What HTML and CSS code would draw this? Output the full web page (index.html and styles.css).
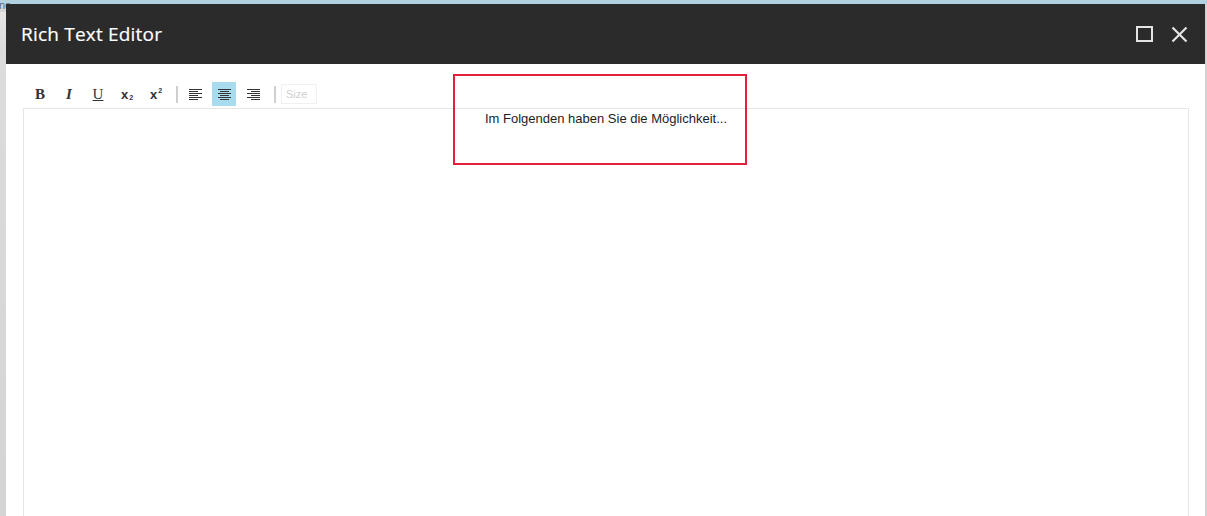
FILE: index.html
```html
<!DOCTYPE html>
<html lang="de">
<head>
<meta charset="utf-8">
<title>Rich Text Editor</title>
<link rel="stylesheet" href="styles.css">
</head>
<body>
<div class="page-top"><span class="page-top-text">ne</span></div>
<div class="page-side"></div>

<div class="modal">
  <div class="modal-header">
    <h1 class="modal-title">Rich Text Editor</h1>
    <div class="modal-actions">
      <button class="hdr-btn" aria-label="Maximieren">
        <svg width="17" height="16" viewBox="0 0 17 16"><rect x="1" y="1" width="15" height="14" fill="none" stroke="#e4e4e4" stroke-width="2"/></svg>
      </button>
      <button class="hdr-btn" aria-label="Schließen">
        <svg width="17" height="17" viewBox="0 0 17 17"><path d="M1.5 1.5 L15.5 15.5 M15.5 1.5 L1.5 15.5" stroke="#e4e4e4" stroke-width="2.2" fill="none"/></svg>
      </button>
    </div>
  </div>
  <div class="modal-body">
    <div class="toolbar">
      <button class="tb-btn tb-bold">B</button>
      <button class="tb-btn tb-italic">I</button>
      <button class="tb-btn tb-under">U</button>
      <button class="tb-btn tb-script">x<span class="sub">2</span></button>
      <button class="tb-btn tb-script">x<span class="sup">2</span></button>
      <span class="tb-sep"></span>
      <button class="tb-btn">
        <svg width="13" height="11" viewBox="0 0 13 11"><g fill="#333"><rect x="0" y="0" width="13" height="1"/><rect x="0" y="2" width="9" height="1"/><rect x="0" y="4" width="13" height="1"/><rect x="0" y="6" width="9" height="1"/><rect x="0" y="8" width="13" height="1"/><rect x="0" y="10" width="9" height="1"/></g></svg>
      </button>
      <button class="tb-btn tb-active">
        <svg width="13" height="11" viewBox="0 0 13 11"><g fill="#333"><rect x="0" y="0" width="13" height="1"/><rect x="2" y="2" width="9" height="1"/><rect x="0" y="4" width="13" height="1"/><rect x="2" y="6" width="9" height="1"/><rect x="0" y="8" width="13" height="1"/><rect x="2" y="10" width="9" height="1"/></g></svg>
      </button>
      <button class="tb-btn">
        <svg width="13" height="11" viewBox="0 0 13 11"><g fill="#333"><rect x="0" y="0" width="13" height="1"/><rect x="4" y="2" width="9" height="1"/><rect x="0" y="4" width="13" height="1"/><rect x="4" y="6" width="9" height="1"/><rect x="0" y="8" width="13" height="1"/><rect x="4" y="10" width="9" height="1"/></g></svg>
      </button>
      <span class="tb-sep tb-sep-2"></span>
      <input class="tb-size" type="text" placeholder="Size">
    </div>
    <div class="editor">
      <p class="editor-line">Im Folgenden haben Sie die Möglichkeit...</p>
    </div>
  </div>
</div>

<div class="highlight-box"></div>
</body>
</html>
```

FILE: styles.css
```css
html, body {
  margin: 0;
  padding: 0;
  width: 1207px;
  height: 516px;
  overflow: hidden;
}

body {
  background: #d6d6d6;
  font-family: "Liberation Sans", Arial, sans-serif;
  position: relative;
}

.page-top {
  height: 4px;
  background: #b2d2e2;
}

.page-top-text {
  position: absolute;
  left: -1px;
  top: 0;
  font-size: 11px;
  line-height: 11px;
  color: #5c6a72;
  z-index: 0;
}

.page-side {
  position: absolute;
  left: 0;
  top: 12px;
  width: 6px;
  bottom: 0;
  background: linear-gradient(to bottom, #e6e6e6 0, #dcdcdc 40px, #d4d4d4 100%);
}

.modal {
  position: absolute;
  left: 6px;
  top: 4px;
  width: 1199px;
  bottom: 0;
  background: #ffffff;
  box-shadow: 1px 0 0 #cfcfcf;
  overflow: hidden;
  z-index: 1;
}

.modal-header {
  height: 60px;
  background: #2b2b2b;
  display: flex;
  align-items: center;
  justify-content: space-between;
  padding: 0 17px 0 15px;
}

.modal-title {
  margin: 0;
  font-family: "Open Sans", "Noto Sans", sans-serif;
  font-weight: 400;
  font-size: 19px;
  letter-spacing: 0.2px;
  color: #ffffff;
  -webkit-text-stroke: 0.2px #ffffff;
}

.modal-actions {
  display: flex;
  align-items: center;
  gap: 18px;
}

.hdr-btn {
  background: none;
  border: 0;
  padding: 0;
  margin: 0;
  display: flex;
  cursor: pointer;
}

.modal-body {
  padding: 18px 16px 0 17px;
}

.toolbar {
  display: flex;
  align-items: center;
  height: 24px;
  margin-bottom: 2px;
  padding-left: 5px;
}

.tb-btn {
  width: 24px;
  height: 24px;
  margin: 0 5px 0 0;
  padding: 0;
  border: 0;
  background: transparent;
  display: flex;
  align-items: center;
  justify-content: center;
  color: #333;
  cursor: pointer;
}

.tb-bold {
  font-family: "Liberation Serif", "Times New Roman", serif;
  font-weight: 700;
  font-size: 15px;
}

.tb-italic {
  font-family: "Liberation Serif", "Times New Roman", serif;
  font-weight: 700;
  font-style: italic;
  font-size: 15px;
}

.tb-under {
  font-family: "Liberation Serif", "Times New Roman", serif;
  font-size: 15px;
  text-decoration: underline;
  text-underline-offset: 1px;
}

.tb-script {
  font-family: "Liberation Sans", Arial, sans-serif;
  font-weight: 700;
  font-size: 13px;
  line-height: 1;
}

.tb-script .sub,
.tb-script .sup {
  font-size: 7px;
  margin-left: 1px;
  position: relative;
}

.tb-script .sub { top: 3px; }
.tb-script .sup { top: -4px; }

.tb-active {
  background: #a9dbee;
}

.tb-sep {
  width: 2px;
  height: 17px;
  background: #cfcfcf;
  margin: 0 5px 0 3px;
}

.tb-sep-2 {
  margin-left: 4px;
}

.tb-size {
  width: 36px;
  height: 20px;
  box-sizing: border-box;
  border: 1px solid #f0f0f0;
  padding: 0 4px;
  font-family: "Liberation Sans", Arial, sans-serif;
  font-size: 11px;
  color: #333;
  background: #fff;
  outline: none;
}

.tb-size::placeholder { color: #cfcfcf; }

.editor {
  border: 1px solid #e6e6e6;
  height: 420px;
  padding-top: 2px;
}

.editor-line {
  margin: 0;
  text-align: center;
  font-family: "Liberation Sans", Arial, sans-serif;
  font-size: 13px;
  line-height: 16px;
  color: #1c1c28;
}

.highlight-box {
  position: absolute;
  left: 453px;
  top: 74px;
  width: 290px;
  height: 87px;
  border: 2px solid #e2213e;
  z-index: 2;
}
```
